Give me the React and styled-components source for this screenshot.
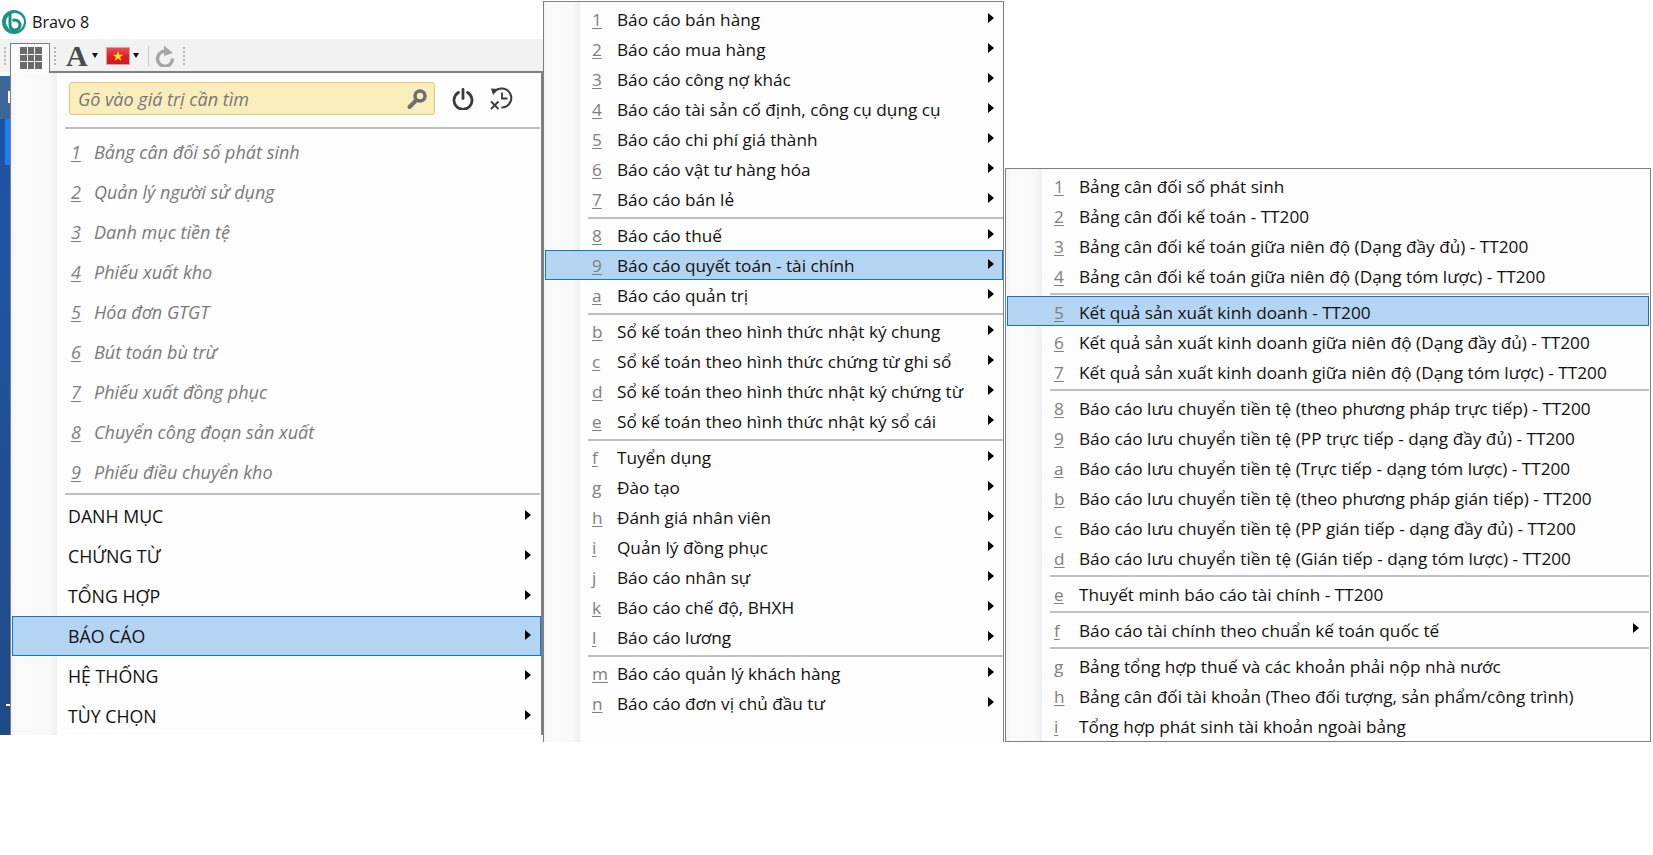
import React from "react";
import styled, { createGlobalStyle } from "styled-components";

const GlobalStyle = createGlobalStyle`
    html, body {
        margin: 0;
        padding: 0;
        background: #fff;
    }
    body {
        font-family: "Open Sans", "Noto Sans", sans-serif;
        width: 1653px;
        height: 855px;
        overflow: hidden;
    }
`;

const Page = styled.div`
    position: relative;
    width: 1653px;
    height: 855px;
    background: #fff;
    overflow: hidden;
`;

const TitleBar = styled.div`
    display: flex;
    align-items: center;
    gap: 6px;
    height: 39px;
    padding: 5px 0 0 2px;
    box-sizing: border-box;
    font-size: 16.2px;
    color: #111;
`;

const Toolbar = styled.div`
    display: flex;
    align-items: center;
    width: 543px;
    height: 33px;
    background: #f2f2f2;
    box-sizing: border-box;
    padding-left: 4px;
`;

const Grip = styled.span`
    width: 0;
    height: 18px;
    margin: ${(p) => p.$margin};
    border-left: 2px dotted #b5b5b5;
`;

const GridButton = styled.div`
    display: grid;
    grid-template-columns: repeat(3, 6.5px);
    grid-auto-rows: 6.5px;
    gap: 1px;
    width: 40px;
    height: 30px;
    margin-top: 4px;
    padding: 3px 9px 0;
    box-sizing: border-box;
    background: #fbfbfb;
    border: 1px solid #7d7d7d;
    border-bottom: none;
    align-self: flex-start;
    position: relative;
    z-index: 3;
    span {
        background: #6a6a6a;
    }
`;

const FontButton = styled.div`
    display: flex;
    align-items: center;
    width: 32px;
    margin-right: 8px;
    font-family: "Liberation Serif", serif;
    font-weight: bold;
    font-size: 30px;
    line-height: 30px;
    color: #4a4a4a;
`;

const DropCaret = styled.i`
    width: 0;
    height: 0;
    margin-left: ${(p) => p.$gap}px;
    border-top: 5px solid #111;
    border-left: 3.5px solid transparent;
    border-right: 3.5px solid transparent;
`;

const ToolDivider = styled.span`
    width: 1px;
    height: 20px;
    margin: 0 6px 0 9px;
    background: #c9c9c9;
`;

const DesktopStrip = styled.div`
    position: absolute;
    left: 0;
    top: 72px;
    width: 10px;
    height: 663px;
    background:
        linear-gradient(#fff, #fff) 8px 19px / 2px 12px no-repeat,
        linear-gradient(#fff, #fff) 6px 632px / 4px 2px no-repeat,
        linear-gradient(#1e80f0, #1e80f0) 5px 47px / 5px 46px no-repeat,
        linear-gradient(
            180deg,
            #fff 0,
            #fff 4px,
            #0078d7 4px,
            #0078d7 5px,
            #3d6596 5px,
            #3d6596 47px,
            #1f52a3 47px,
            #1f55a0 200px,
            #1f4f92 400px,
            #1f4a85 663px
        );
`;

const Popup = styled.div`
    position: absolute;
    left: ${(p) => p.$left}px;
    top: ${(p) => p.$top}px;
    width: ${(p) => p.$width}px;
    height: ${(p) => p.$height}px;
    box-sizing: border-box;
    background: linear-gradient(
        90deg,
        #f3f3f3 0,
        #fafafa 5px,
        #f9f9f9 ${(p) => p.$gutter - 8}px,
        #efefef ${(p) => p.$gutter}px,
        #fdfdfd ${(p) => p.$gutter}px
    );
    border: 1px solid #7f7f7f;
    border-bottom-width: ${(p) => (p.$openBottom ? 0 : 1)}px;
    padding: ${(p) => p.$padding};
`;

const MenuPopup = styled(Popup)`
    border-top-width: 2px;
    border-right-width: 2px;
`;

const SearchRow = styled.div`
    display: flex;
    align-items: center;
    height: 33px;
    margin: 9px 0 12px 58px;
`;

const SearchBox = styled.div`
    display: flex;
    align-items: center;
    justify-content: space-between;
    width: 366px;
    height: 33px;
    box-sizing: border-box;
    padding: 0 6px 0 8px;
    background: #faedbc;
    border: 1px solid #f3c56e;
    border-radius: 3px;
    font-size: 18px;
    font-style: italic;
    color: #777;
`;

const IconButton = styled.span`
    display: flex;
    margin-left: ${(p) => p.$gap}px;
`;

const Separator = styled.div`
    height: 2px;
    margin: ${(p) => p.$margin};
    background: #c0c0c0;
`;

const Row = styled.div`
    display: flex;
    align-items: center;
    position: relative;
    height: ${(p) => p.$height}px;
    padding-top: ${(p) => p.$nudge || 0}px;
    box-sizing: border-box;
    font-size: ${(p) => p.$size}px;
    font-style: ${(p) => (p.$recent ? "italic" : "normal")};
    color: ${(p) => (p.$recent ? "#7a7a7a" : "#111")};
    white-space: nowrap;
    background: ${(p) => (p.$active ? "#b3d5f2" : "transparent")};
    outline: ${(p) => (p.$active ? "1px solid #0a78d2" : "none")};
    outline-offset: -1px;
`;

const Key = styled.span`
    width: ${(p) => p.$width}px;
    flex-shrink: 0;
    box-sizing: border-box;
    padding-left: ${(p) => p.$left}px;
    color: #808080;
    span {
        text-decoration: underline;
        text-underline-offset: 2px;
    }
`;

const Arrow = styled.i`
    position: absolute;
    right: ${(p) => p.$right}px;
    top: 50%;
    margin-top: -6px;
    width: 0;
    height: 0;
    border-left: 6px solid #000;
    border-top: 5.5px solid transparent;
    border-bottom: 5.5px solid transparent;
`;

const SectionRow = styled(Row)`
    margin: 0 0 0 1px;
`;

const SectionLabel = styled.span`
    padding-left: 56px;
`;

const Logo = () => (
    <svg width="24" height="24" viewBox="0 0 24 24">
        <circle cx="12" cy="12" r="12" fill="#1b9484" />
        <circle cx="13" cy="12" r="9" fill="#fff" />
        <path d="M8 4v11a5 5 0 1 0 2.500-4.300" fill="none" stroke="#1a8d80" strokeWidth="3" />
    </svg>
);

const FlagIcon = () => (
    <svg width="24" height="18" viewBox="0 0 24 18">
        <defs>
            <linearGradient id="flagRed" x1="0" y1="0" x2="0" y2="1">
                <stop offset="0" stopColor="#e8505a" />
                <stop offset="0.5" stopColor="#e0202a" />
                <stop offset="1" stopColor="#cc1a22" />
            </linearGradient>
        </defs>
        <rect x="0.500" y="0.500" width="23" height="17" fill="url(#flagRed)" stroke="#d8a0a0" />
        <path d="M12 4l1.300 3.700h3.900l-3.100 2.300 1.200 3.700-3.300-2.200-3.300 2.200 1.200-3.700-3.100-2.300h3.900z" fill="#ffe61a" />
    </svg>
);

const RefreshIcon = () => (
    <svg width="20" height="22" viewBox="0 0 20 22">
        <path d="M12 6.500A7.500 7.500 0 1 0 17.500 13.500" fill="none" stroke="#a6a6a6" strokeWidth="3.400" />
        <path d="M9 0.500l9 7.500-9 3z" fill="#a6a6a6" />
    </svg>
);

const SearchIcon = () => (
    <svg width="22" height="22" viewBox="0 0 22 22">
        <circle cx="14" cy="8" r="5" fill="none" stroke="#6e6e6e" strokeWidth="3.500" />
        <path d="M10 12.500 3.500 19" stroke="#6e6e6e" strokeWidth="4" strokeLinecap="round" />
    </svg>
);

const PowerIcon = () => (
    <svg width="22" height="22" viewBox="0 0 22 22">
        <path d="M6.500 4.500a9 9 0 1 0 9 0" fill="none" stroke="#3a3a3a" strokeWidth="2.800" strokeLinecap="round" />
        <path d="M11 1.500v9" stroke="#3a3a3a" strokeWidth="2.800" strokeLinecap="round" />
    </svg>
);

const HistoryClearIcon = () => (
    <svg width="23" height="23" viewBox="0 0 23 23">
        <path d="M4 5.500A9.500 9.500 0 1 1 11.500 20.500" fill="none" stroke="#3a3a3a" strokeWidth="2" />
        <path d="M1 1.500 8 2 3 8z" fill="#3a3a3a" />
        <path d="M12 5.500v6h5.500M1 14.500l7.500 7.500M8.500 14.500 1 22" fill="none" stroke="#3a3a3a" strokeWidth="1.800" />
    </svg>
);

const recent = [
    ["1", "Bảng cân đối số phát sinh"],
    ["2", "Quản lý người sử dụng"],
    ["3", "Danh mục tiền tệ"],
    ["4", "Phiếu xuất kho"],
    ["5", "Hóa đơn GTGT"],
    ["6", "Bút toán bù trừ"],
    ["7", "Phiếu xuất đồng phục"],
    ["8", "Chuyển công đoạn sản xuất"],
    ["9", "Phiếu điều chuyển kho"],
];

const sections = [
    { label: "DANH MỤC" },
    { label: "CHỨNG TỪ" },
    { label: "TỔNG HỢP" },
    { label: "BÁO CÁO", active: true },
    { label: "HỆ THỐNG" },
    { label: "TÙY CHỌN" },
];

const reportGroups = [
    [
        ["1", "Báo cáo bán hàng"],
        ["2", "Báo cáo mua hàng"],
        ["3", "Báo cáo công nợ khác"],
        ["4", "Báo cáo tài sản cố định, công cụ dụng cụ"],
        ["5", "Báo cáo chi phí giá thành"],
        ["6", "Báo cáo vật tư hàng hóa"],
        ["7", "Báo cáo bán lẻ"],
    ],
    [
        ["8", "Báo cáo thuế"],
        ["9", "Báo cáo quyết toán - tài chính", true],
        ["a", "Báo cáo quản trị"],
    ],
    [
        ["b", "Sổ kế toán theo hình thức nhật ký chung"],
        ["c", "Sổ kế toán theo hình thức chứng từ ghi sổ"],
        ["d", "Sổ kế toán theo hình thức nhật ký chứng từ"],
        ["e", "Sổ kế toán theo hình thức nhật ký sổ cái"],
    ],
    [
        ["f", "Tuyển dụng"],
        ["g", "Đào tạo"],
        ["h", "Đánh giá nhân viên"],
        ["i", "Quản lý đồng phục"],
        ["j", "Báo cáo nhân sự"],
        ["k", "Báo cáo chế độ, BHXH"],
        ["l", "Báo cáo lương"],
    ],
    [
        ["m", "Báo cáo quản lý khách hàng"],
        ["n", "Báo cáo đơn vị chủ đầu tư"],
    ],
];

const financeGroups = [
    [
        ["1", "Bảng cân đối số phát sinh"],
        ["2", "Bảng cân đối kế toán - TT200"],
        ["3", "Bảng cân đối kế toán giữa niên độ (Dạng đầy đủ) - TT200"],
        ["4", "Bảng cân đối kế toán giữa niên độ (Dạng tóm lược) - TT200"],
    ],
    [
        ["5", "Kết quả sản xuất kinh doanh - TT200", true],
        ["6", "Kết quả sản xuất kinh doanh giữa niên độ (Dạng đầy đủ) - TT200"],
        ["7", "Kết quả sản xuất kinh doanh giữa niên độ (Dạng tóm lược) - TT200"],
    ],
    [
        ["8", "Báo cáo lưu chuyển tiền tệ (theo phương pháp trực tiếp) - TT200"],
        ["9", "Báo cáo lưu chuyển tiền tệ (PP trực tiếp - dạng đầy đủ) - TT200"],
        ["a", "Báo cáo lưu chuyển tiền tệ (Trực tiếp - dạng tóm lược) - TT200"],
        ["b", "Báo cáo lưu chuyển tiền tệ (theo phương pháp gián tiếp) - TT200"],
        ["c", "Báo cáo lưu chuyển tiền tệ (PP gián tiếp - dạng đầy đủ) - TT200"],
        ["d", "Báo cáo lưu chuyển tiền tệ (Gián tiếp - dạng tóm lược) - TT200"],
    ],
    [["e", "Thuyết minh báo cáo tài chính - TT200"]],
    [["f", "Báo cáo tài chính theo chuẩn kế toán quốc tế", false, true]],
    [
        ["g", "Bảng tổng hợp thuế và các khoản phải nộp nhà nước"],
        ["h", "Bảng cân đối tài khoản (Theo đối tượng, sản phẩm/công trình)"],
        ["i", "Tổng hợp phát sinh tài khoản ngoài bảng"],
    ],
];

const GroupedMenu = ({ groups, keyWidth, arrowRight, arrows, nudge }) =>
    groups.map((group, i) => (
        <React.Fragment key={i}>
            {i > 0 && <Separator $margin="3px 0 1px 43px" />}
            {group.map((item) => (
                <Row key={item[0]} $height={30} $size={17.2} $active={item[2]} $nudge={nudge}>
                    <Key $width={keyWidth} $left={47}>
                        <span>{item[0]}</span>
                    </Key>
                    {item[1]}
                    {(arrows || item[3]) && <Arrow $right={arrowRight} />}
                </Row>
            ))}
        </React.Fragment>
    ));

export default function App() {
    return (
        <Page>
            <GlobalStyle />
            <TitleBar>
                <Logo />
                Bravo 8
            </TitleBar>
            <Toolbar>
                <Grip $margin="0 4px 0 0" />
                <GridButton>
                    {Array.from({ length: 9 }).map((_, i) => (
                        <span key={i} />
                    ))}
                </GridButton>
                <Grip $margin="0 10px 0 4px" />
                <FontButton>
                    A
                    <DropCaret $gap={4} />
                </FontButton>
                <FlagIcon />
                <DropCaret $gap={3} />
                <ToolDivider />
                <RefreshIcon />
                <Grip $margin="0 0 0 8px" />
            </Toolbar>
            <DesktopStrip />
            <MenuPopup $left={10} $top={71} $width={533} $height={664} $gutter={46} $openBottom $padding="0">
                <SearchRow>
                    <SearchBox>
                        Gõ vào giá trị cần tìm
                        <SearchIcon />
                    </SearchBox>
                    <IconButton $gap={17}>
                        <PowerIcon />
                    </IconButton>
                    <IconButton $gap={16}>
                        <HistoryClearIcon />
                    </IconButton>
                </SearchRow>
                <Separator $margin="0 1px 3px 54px" />
                {recent.map((item) => (
                    <Row key={item[0]} $height={40} $size={18} $recent>
                        <Key $width={83} $left={60}>
                            <span>{item[0]}</span>
                        </Key>
                        {item[1]}
                    </Row>
                ))}
                <Separator $margin="1px 1px 1px 54px" />
                {sections.map((s) => (
                    <SectionRow key={s.label} $height={40} $size={17.75} $active={s.active}>
                        <SectionLabel>{s.label}</SectionLabel>
                        <Arrow $right={10} />
                    </SectionRow>
                ))}
            </MenuPopup>
            <Popup
                $left={543}
                $top={1}
                $width={461}
                $height={741}
                $gutter={36}
                $openBottom
                $padding="2px 0 0 1px"
            >
                <GroupedMenu groups={reportGroups} keyWidth={72} arrowRight={9} arrows />
            </Popup>
            <Popup
                $left={1005}
                $top={168}
                $width={646}
                $height={574}
                $gutter={36}
                $padding="1px 1px 0 1px"
            >
                <GroupedMenu groups={financeGroups} keyWidth={72} arrowRight={10} nudge={2} />
            </Popup>
        </Page>
    );
}
